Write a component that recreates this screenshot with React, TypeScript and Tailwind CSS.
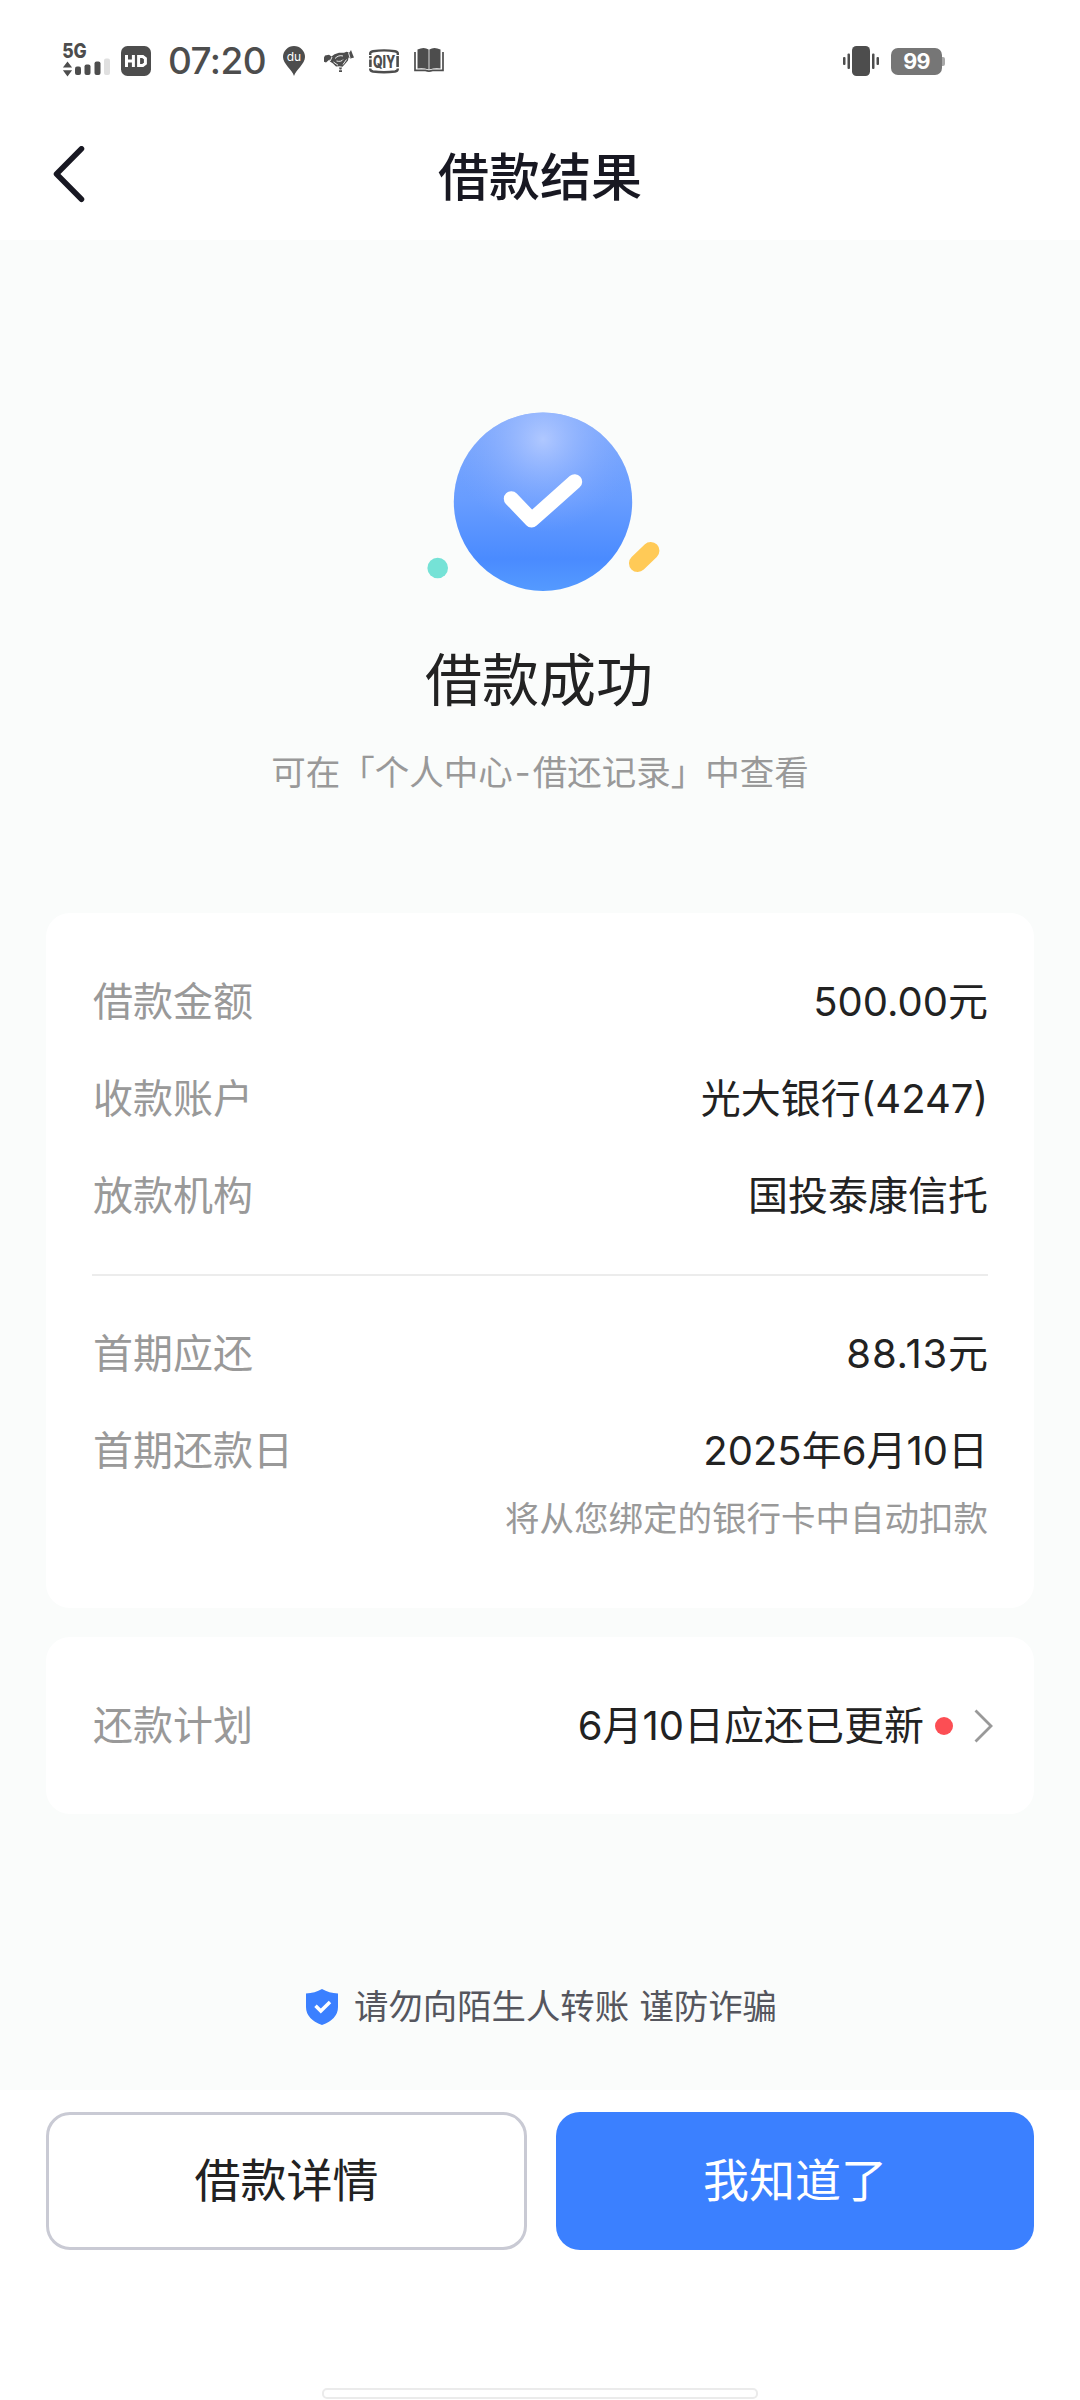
import type { ReactNode } from "react";

function StatusBar() {
  return (
    <div className="flex h-[120px] items-start text-[#4d4d4d]">
      <svg className="mt-[40px] ml-[60px] h-[40px] w-[52px] shrink-0" viewBox="60 40 52 40" fill="currentColor">
        <text x="62.2" y="58.4" fontSize="20" fontWeight="800" textLength="24.5" lengthAdjust="spacingAndGlyphs">5G</text>
        <path d="M67.5 61.5l4.6 6h-9.2z M67.5 76.5l4.6-6.2h-9.2z" />
        <rect x="75" y="66.5" width="6" height="8.5" rx="2" />
        <rect x="84.5" y="64.5" width="6" height="10.5" rx="2" />
        <rect x="94.5" y="61.5" width="6" height="13.5" rx="2" />
        <rect x="104" y="58.5" width="6" height="16.5" rx="2" fill="#e0e0e0" />
      </svg>
      <svg className="mt-[46px] ml-[9px] h-[30px] w-[30px] shrink-0" viewBox="0 0 30 30" fill="currentColor">
        <rect width="30" height="30" rx="6.5" />
        <path d="M5.5 9v12M12.4 9v12M5.5 15h7M17.6 10.5v9h4.200l2.600-2v-5l-2.600-2z" stroke="#fff" strokeWidth="3" fill="none" />
      </svg>
      <div className="mt-[41px] ml-[17px] w-[102px] text-[37px] leading-[40px] font-medium tracking-[-0.6px] whitespace-nowrap">07:20</div>
      <svg className="mt-[46px] ml-[12px] h-[30px] w-[24px] shrink-0" viewBox="0 0 24 30" fill="currentColor">
        <path d="M12 30C10 23.500 1 18 1 11a11 11 0 0 1 22 0C23 18 14 23.500 12 30z" />
        <text x="12" y="15" fontSize="12" fill="#fff" textAnchor="middle">du</text>
      </svg>
      <svg className="mt-[49px] ml-[18px] h-[24px] w-[30px] shrink-0" viewBox="0 0 30 24" fill="currentColor">
        <path d="M0 8.500L1 6.500 5 5.800 7.500 7.600 10.500 5.200 15 3.800 20 3.800 22.500 2.800 25.500 3.600 27 1 28.500 5 30 8.500 26.500 9.500 24.500 8.500 24 11.500 21 15 18.500 17.800 15.500 17.200 12 17.500 9 14.500 6 12.500 5.500 10.500 2 13.500 0 12.800z" />
        <path d="M8 8l-1.800 4M11 9.500c2.500-2.600 5-3.300 8-2.500M9.500 13l4.500 3.200M12.500 12c3 .8 5.500.3 6.500-1.500M24.500 3.500l1.500 5.500M22.500 10.500l-3.500 5" stroke="#fff" fill="none" strokeWidth="0.9" />
        <path d="M15 18.500h3l-.6 2h-1.800zM15 21.200h3v1.800h-3z" />
      </svg>
      <svg className="mt-[49px] ml-[15px] h-[25px] w-[30px] shrink-0 overflow-visible" viewBox="0 0 30 25" fill="none" stroke="currentColor">
        <path d="M1.200 6V4.500Q1.200 2.600 4 2.200Q15 .6 26 2.200Q28.800 2.600 28.800 4.500V6M1.200 19.500v.5q0 2 2.800 2.500q11 1.600 22 0q2.800-.500 2.800-2.500v-.5" strokeWidth="2.400" />
        <path d="M1.400 7v2.200M1.400 10.500v7.500M28.600 7v11" strokeWidth="2.600" />
        <text x="3.900" y="18.600" fontSize="17" fontWeight="800" fill="currentColor" stroke="none" textLength="22.500" lengthAdjust="spacingAndGlyphs">QIY</text>
      </svg>
      <svg className="mt-[48px] ml-[15px] h-[24px] w-[30px] shrink-0" viewBox="0 0 30 24" fill="currentColor">
        <path d="M3.500 1.500Q10-1.500 14.600 1.500V21.500Q9 19.500 3.500 20.500zM26.500 1.500Q20-1.500 15.400 1.500V21.500Q21 19.500 26.500 20.500z" />
        <path d="M1 4v18.400h10.500q3.500 1.300 7 0H29V4" fill="none" stroke="currentColor" strokeWidth="1.700" />
      </svg>
      <svg className="mt-[46px] ml-[399px] h-[30px] w-[36px] shrink-0" viewBox="0 0 36 30" fill="currentColor">
        <rect x="9" width="18" height="30" rx="4.500" />
        <rect y="11" width="2.500" height="8" rx="1" />
        <rect x="4.500" y="7.500" width="2.500" height="15.500" rx="1" />
        <rect x="29" y="7.500" width="2.500" height="15.500" rx="1" />
        <rect x="33.500" y="11" width="2.500" height="8" rx="1" />
      </svg>
      <div className="mt-[48px] ml-[12px] flex items-center">
        <div className="h-[27px] w-[51px] rounded-[7px] bg-[#767676] text-center text-[21.5px] leading-[27px] font-bold tracking-[-0.8px] text-white">99</div>
        <div className="h-[9px] w-[3px] rounded-r-[2px] bg-[#a8a8a8]" />
      </div>
    </div>
  );
}

function Row({ label, children }: { label: string; children: ReactNode }) {
  return (
    <div className="flex h-[97.4px] items-center justify-between">
      <span className="pl-px text-[#999999]">{label}</span>
      <span className="text-[#222222]">{children}</span>
    </div>
  );
}

export default function App() {
  return (
    <div className="flex h-[2400px] w-[1080px] flex-col overflow-hidden bg-[#fafcfb] font-[Inter,'Noto_Sans_CJK_SC',sans-serif]">
      <header className="h-[240px] bg-white">
        <StatusBar />
        <div className="grid h-[112px] grid-cols-[1fr_auto_1fr] items-center">
          <svg className="ml-[50px] h-[60px] w-[40px]" viewBox="0 0 40 60" fill="none" stroke="#181822" strokeWidth="5.500" strokeLinecap="round" strokeLinejoin="round">
            <path d="M31.500 2.800L6.500 28L31.500 53.300" />
          </svg>
          <h1 className="pt-[4px] text-[51px] leading-[60px] font-medium text-[#181822]">借款结果</h1>
        </div>
      </header>

      <main className="flex h-[1850px] flex-col items-center">
        <svg className="mt-[160px] h-[200px] w-[240px] shrink-0" viewBox="420 400 240 200">
          <defs>
            <linearGradient id="ball" x1="0" y1="0" x2="0" y2="1">
              <stop offset="0" stopColor="#82abfc" />
              <stop offset="0.5" stopColor="#679cff" />
              <stop offset="0.82" stopColor="#4a8bff" />
              <stop offset="1" stopColor="#549aff" />
            </linearGradient>
            <radialGradient id="shine" cx="0.5" cy="0.15" r="0.52">
              <stop offset="0" stopColor="#b0c8ff" />
              <stop offset="1" stopColor="#7ba4ff" stopOpacity="0" />
            </radialGradient>
          </defs>
          <circle cx="543" cy="501.700" r="89.200" fill="url(#ball)" />
          <circle cx="543" cy="501.700" r="89.200" fill="url(#shine)" />
          <path d="M511.300 498.700L531.700 520L574.700 481.700" fill="none" stroke="#fff" strokeWidth="15" strokeLinecap="round" strokeLinejoin="round" />
          <circle cx="437.700" cy="568" r="10.300" fill="#75e2d6" />
          <path d="M637.700 563.300L650.700 550.700" stroke="#ffca57" strokeWidth="17.500" strokeLinecap="round" />
        </svg>
        <h2 className="mt-[46px] mr-[2px] text-[57px] leading-[70px] text-[#222222]">借款成功</h2>
        <p className="mt-[32px] text-[34.5px] leading-[50px] whitespace-nowrap text-[#999999]">
          可在「个人中心<span className="inline-block w-[20px] text-center">-</span>借还记录」中查看
        </p>

        <section className="mt-[115px] h-[695px] w-[988px] rounded-[24px] bg-white px-[46px] pt-[40px] text-[40px] leading-[50px]">
          <Row label="借款金额">500.00元</Row>
          <Row label="收款账户">光大银行(4247)</Row>
          <Row label="放款机构">国投泰康信托</Row>
          <div className="mt-[29px] mb-[29px] h-[2px] bg-[#ececec]" />
          <Row label="首期应还">
            <span className="tracking-[0.8px]">88.13</span>元
          </Row>
          <Row label="首期还款日">2025年6月10日</Row>
          <p className="-mt-[6px] text-right text-[34.5px] text-[#999999]">将从您绑定的银行卡中自动扣款</p>
        </section>

        <section className="mt-[29px] flex h-[177px] w-[988px] items-center rounded-[24px] bg-white pr-[39px] pl-[47px] text-[40px] leading-[50px]">
          <span className="text-[#999999]">还款计划</span>
          <span className="ml-auto text-[#222222]">6月10日应还已更新</span>
          <span className="ml-[11px] h-[18px] w-[18px] rounded-full bg-[#fc4e54]" />
          <svg className="ml-[20px] h-[36px] w-[22px]" viewBox="0 0 22 36" fill="none" stroke="#999" strokeWidth="2.800">
            <path d="M2.500 2.500L18 18L2.500 33.500" />
          </svg>
        </section>

        <div className="mt-[168px] ml-[2px] flex items-center text-[34.4px] leading-[50px] text-[#55565e]">
          <svg className="mr-[15px] h-[38px] w-[34px]" viewBox="0 0 34 38">
            <path d="M17 1Q24 5 33 5.500V19Q33 31 17 37Q1 31 1 19V5.500Q10 5 17 1Z" fill="#3b80ff" />
            <path d="M10.500 17.800L15.800 23L25 14" stroke="#fff" strokeWidth="3.500" fill="none" />
          </svg>
          <span className="[word-spacing:0.6px]">请勿向陌生人转账 谨防诈骗</span>
        </div>
      </main>

      <footer className="flex h-[310px] flex-col bg-white px-[46px] pt-[22px]">
        <div className="flex justify-between text-[46px] leading-[60px]">
          <button className="h-[138px] w-[481px] rounded-[24px] border-[3px] border-[#c9cad4] pb-[2px] text-[#222222]">借款详情</button>
          <button className="h-[138px] w-[478px] rounded-[24px] bg-[#3b80ff] pb-[2px] text-white">我知道了</button>
        </div>
        <div className="mx-auto mt-[138px] h-[11px] w-[436px] rounded-[5px] border-2 border-[#ebebeb] bg-white" />
      </footer>
    </div>
  );
}
